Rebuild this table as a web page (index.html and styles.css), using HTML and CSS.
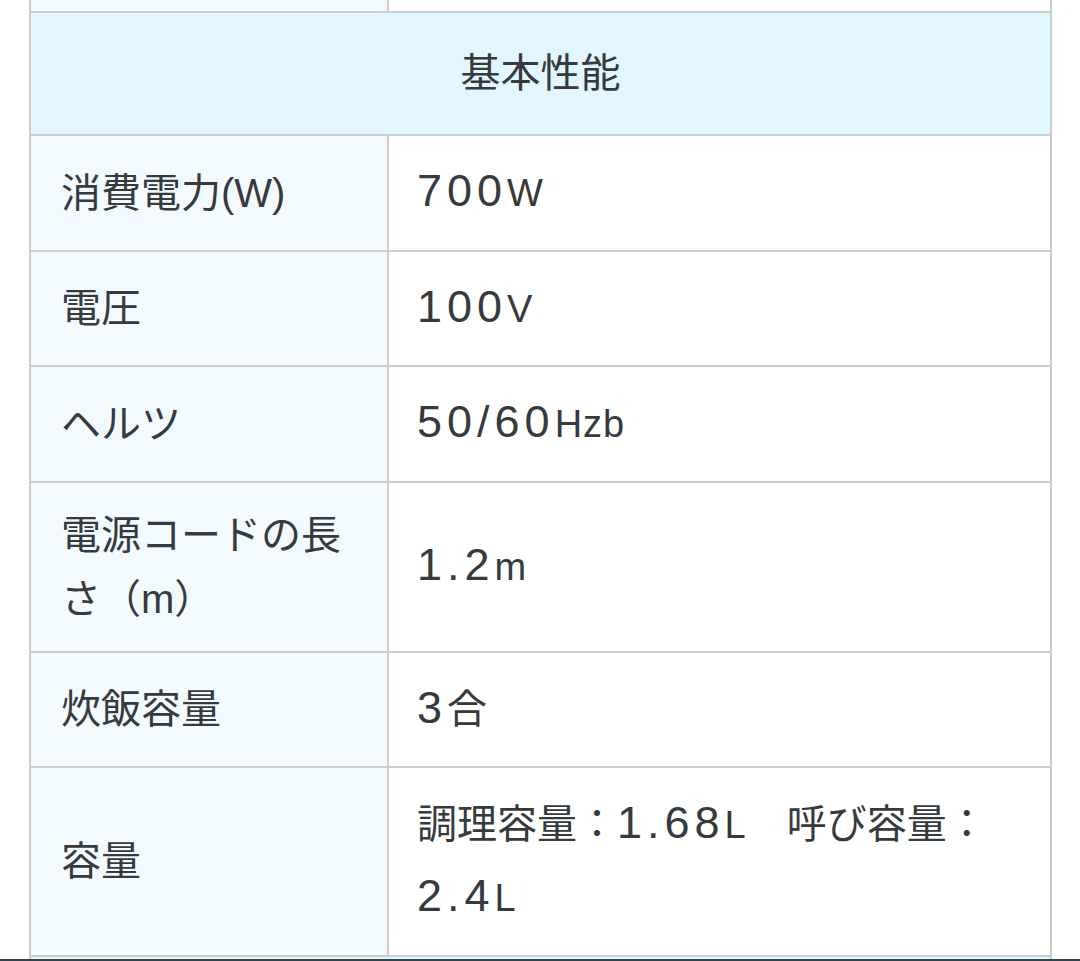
FILE: index.html
```html
<!DOCTYPE html>
<html lang="ja">
<head>
<meta charset="utf-8">
<title>基本性能</title>
<link rel="stylesheet" href="styles.css">
</head>
<body>
<div class="page">
  <table class="spec">
    <colgroup>
      <col class="col-label">
      <col class="col-value">
    </colgroup>
    <tbody>
      <tr class="row-cut">
        <td class="label"></td>
        <td class="value"></td>
      </tr>
      <tr>
        <th class="section" colspan="2">基本性能</th>
      </tr>
      <tr>
        <td class="label">消費電力(W)</td>
        <td class="value"><span class="num">700</span><span class="unit">W</span></td>
      </tr>
      <tr>
        <td class="label">電圧</td>
        <td class="value"><span class="num">100</span><span class="unit">V</span></td>
      </tr>
      <tr>
        <td class="label">ヘルツ</td>
        <td class="value"><span class="num">50/60</span><span class="unit">Hzb</span></td>
      </tr>
      <tr>
        <td class="label">電源コードの長さ（m）</td>
        <td class="value"><span class="num">1.2</span><span class="unit">m</span></td>
      </tr>
      <tr>
        <td class="label">炊飯容量</td>
        <td class="value"><span class="num">3</span>合</td>
      </tr>
      <tr>
        <td class="label">容量</td>
        <td class="value">調理容量：<span class="num">1.68</span><span class="unit">L</span>　呼び容量：<span class="num">2.4</span><span class="unit">L</span></td>
      </tr>
      <tr class="row-next">
        <th class="section-next" colspan="2"></th>
      </tr>
    </tbody>
  </table>
  <div class="bottom-bar"></div>
</div>
</body>
</html>
```

FILE: styles.css
```css
html, body {
  margin: 0;
  padding: 0;
  background: #ffffff;
}

body {
  font-family: "Liberation Sans", "Noto Sans CJK JP", sans-serif;
  color: #363a3d;
  overflow: hidden;
}

.page {
  height: 961px;
  display: flex;
  flex-direction: column;
}

.spec {
  margin-left: 29px;
  width: 1023px;
  border-collapse: collapse;
  table-layout: fixed;
  flex: none;
}

.col-label {
  width: 358px;
}

.spec td,
.spec th {
  border: 2px solid #cbcdcf;
  padding: 20px 30px 20px 30px;
  vertical-align: middle;
  text-align: left;
}

.label {
  background: #f2faff;
  font-size: 40px;
  line-height: 64px;
}

.value {
  background: #ffffff;
  font-size: 40px;
  line-height: 73px;
}

.spec td.value {
  padding-left: 28px;
  padding-bottom: 20.5px;
}

.spec .row-cut td {
  border-top: 0;
  height: 11px;
  padding: 0;
}

.num {
  font-size: 45px;
  line-height: 1;
  letter-spacing: 5px;
}

.unit {
  font-size: 38px;
  line-height: 1;
  letter-spacing: 1px;
}

.spec th.section {
  background: #e1f6fe;
  font-size: 40px;
  font-weight: normal;
  line-height: 64px;
  text-align: center;
  padding: 28px 0 29px;
}

.spec th.section-next {
  background: #e1f6fe;
  border-top-color: #c6d6de;
  border-bottom: 0;
  height: 2px;
  padding: 0;
}

.bottom-bar {
  flex: none;
  height: 10px;
  background: #34464d;
}
```
